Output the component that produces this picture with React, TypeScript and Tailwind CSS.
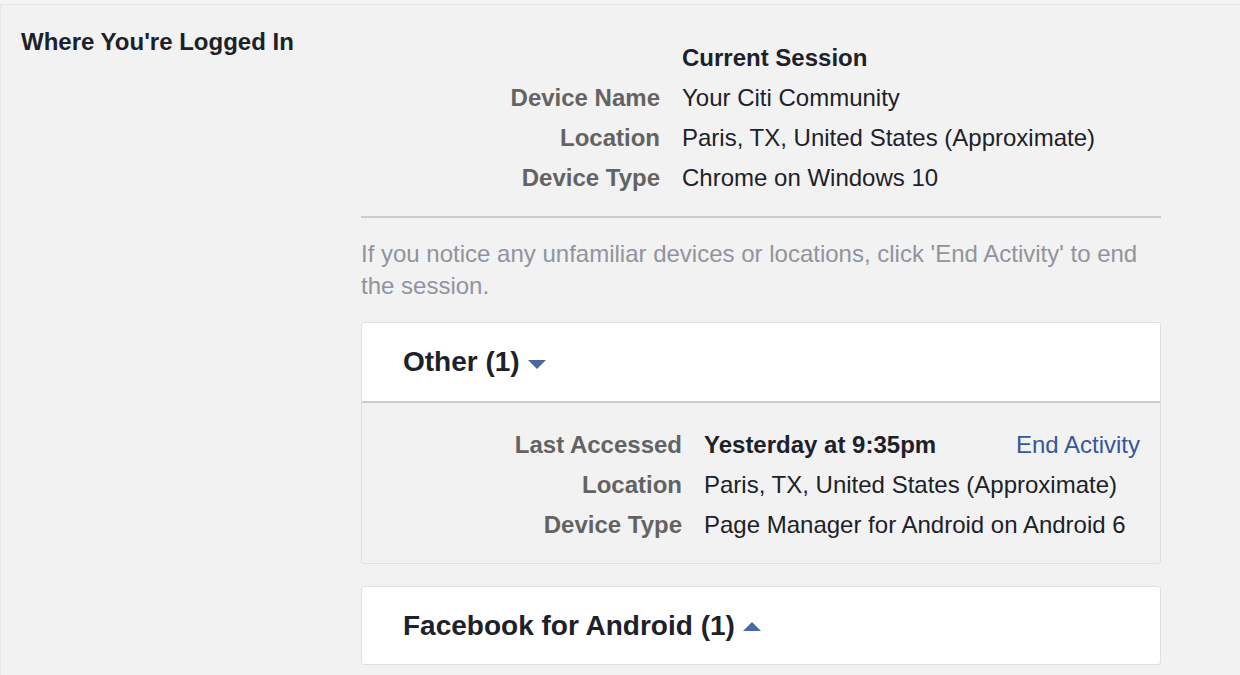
import React from "react";

const Down = () => (
  <svg width="18" height="10" viewBox="0 0 18 10" className="inline-block ml-[8px] mt-[6px]">
    <polygon points="0,0 18,0 9,9" fill="#4b67a1" />
  </svg>
);
const Up = () => (
  <svg width="18" height="10" viewBox="0 0 18 10" className="inline-block ml-[8px] mt-[2px]">
    <polygon points="0,9 18,9 9,0" fill="#4b67a1" />
  </svg>
);

export default function App() {
  return (
    <div className="w-[1240px] h-[675px] bg-[#f2f2f2] overflow-hidden" style={{ fontFamily: '"Liberation Sans", Arial, sans-serif' }}>
      <div className="h-[4px] bg-[#f4f4f4]" />
      <div className="flex border-t border-l border-[#e5e5e8] h-full">
        <div className="w-[360px] pl-[20px] pt-[23px]">
          <div className="text-[24px] font-bold text-[#1d2129] leading-[28px]">Where You're Logged In</div>
        </div>
        <div className="w-[800px] pt-[33px]">
          <div className="grid grid-cols-[299px_1fr] gap-x-[22px] text-[24px] leading-[40px]">
            <div />
            <div className="font-bold text-[#1d2129]">Current Session</div>
            <div className="text-right font-bold text-[#636363]">Device Name</div>
            <div className="text-[#1d2129]">Your Citi Community</div>
            <div className="text-right font-bold text-[#636363]">Location</div>
            <div className="text-[#1d2129]">Paris, TX, United States (Approximate)</div>
            <div className="text-right font-bold text-[#636363]">Device Type</div>
            <div className="text-[#1d2129]">Chrome on Windows 10</div>
          </div>
          <div className="mt-[18px] border-t-2 border-[#cccccc]" />
          <div className="mt-[20px] text-[24px] leading-[32px] text-[#90949c]">
            If you notice any unfamiliar devices or locations, click 'End Activity' to end the session.
          </div>
          <div className="mt-[20px] border border-[#dddfe2] rounded-[3px] overflow-hidden">
            <div className="bg-white h-[80px] pl-[41px] flex items-center border-b-2 border-[#cccccc]">
              <span className="text-[28px] font-bold text-[#1d2129]">Other (1)</span>
              <Down />
            </div>
            <div className="bg-[#f2f2f2] pt-[22px] pb-[18px] pr-[20px] grid grid-cols-[320px_1fr_auto] gap-x-[22px] text-[24px] leading-[40px]">
              <div className="text-right font-bold text-[#636363]">Last Accessed</div>
              <div className="font-bold text-[#1d2129]">Yesterday at 9:35pm</div>
              <div className="text-[#365899]">End Activity</div>
              <div className="text-right font-bold text-[#636363]">Location</div>
              <div className="text-[#1d2129] col-span-2">Paris, TX, United States (Approximate)</div>
              <div className="text-right font-bold text-[#636363]">Device Type</div>
              <div className="text-[#1d2129] col-span-2">Page Manager for Android on Android 6</div>
            </div>
          </div>
          <div className="mt-[22px] border border-[#dddfe2] rounded-[3px] bg-white h-[79px] pl-[41px] flex items-center">
            <span className="text-[28px] font-bold text-[#1d2129]">Facebook for Android (1)</span>
            <Up />
          </div>
        </div>
      </div>
    </div>
  );
}
